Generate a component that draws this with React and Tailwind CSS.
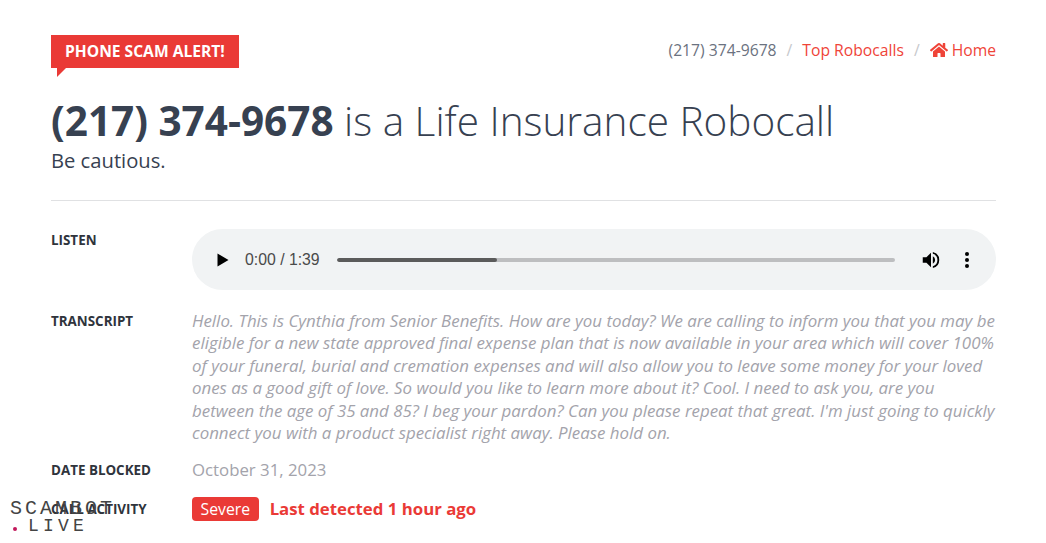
import { FaHome } from 'react-icons/fa'

const Row = ({ label, className = '', children }) => (
  <div className={`flex ${className}`}>
    <div className="w-[141px] shrink-0 text-[13.4px] font-bold text-[#2f343c] uppercase">{label}</div>
    <div className="min-w-0 flex-1">{children}</div>
  </div>
)

const AudioPlayer = () => (
  <div className="flex h-[61px] items-center rounded-[31px] bg-[#f1f3f4] pr-[26px] pl-[25px]">
    <svg width="12" height="14" viewBox="0 0 12 14" className="shrink-0">
      <path d="M0.5 0.5 L11.5 7 L0.5 13.5 Z" fill="#000" />
    </svg>
    <span className="ml-[16px] font-['Liberation_Sans',sans-serif] text-[15.8px] text-[#4a4a4a]">0:00 / 1:39</span>
    <div className="ml-[17px] flex h-1 w-[558px] overflow-hidden rounded-full bg-[#bdbec0]">
      <div className="h-full w-[160px] rounded-full bg-[#5b5b5b]" />
    </div>
    <svg width="22" height="22" viewBox="0 0 24 24" className="ml-[25px] shrink-0">
      <path d="M3 9v6h4l5 5V4L7 9H3zm13.5 3A4.5 4.5 0 0 0 14 7.97v8.05A4.5 4.5 0 0 0 16.5 12zM14 3.23v2.06a7 7 0 0 1 0 13.42v2.06a9 9 0 0 0 0-17.54z" fill="#000" />
    </svg>
    <svg width="4" height="16" viewBox="0 0 4 16" className="ml-[23px] shrink-0">
      <circle cx="2" cy="2" r="2" fill="#000" />
      <circle cx="2" cy="8" r="2" fill="#000" />
      <circle cx="2" cy="14" r="2" fill="#000" />
    </svg>
  </div>
)

export default function App() {
  return (
    <div className="relative h-[543px] overflow-hidden bg-white pt-[35px] pr-[50px] pl-[51px] font-['Open_Sans',sans-serif] text-[#374151]">
      {/* top bar */}
      <div className="flex items-start justify-between">
        <div className="relative bg-[#ea3a36] px-[14px] py-[5px] text-[15.6px] leading-[23px] font-bold text-white">
          PHONE SCAM ALERT!
          <div className="absolute top-full left-[6px] h-0 w-0 border-t-[9px] border-r-[9px] border-t-[#ea3a36] border-r-transparent" />
        </div>
        <div className="flex items-center pt-[3px] text-[15.7px] leading-[24px]">
          <span className="text-[#6b7280]">(217) 374-9678</span>
          <span className="mx-[10px] text-[#c6c8cc]">/</span>
          <span className="text-[#ef4438]">Top Robocalls</span>
          <span className="mx-[10px] text-[#c6c8cc]">/</span>
          <span className="flex items-center gap-[4px] text-[#ef4438]">
            <FaHome size={18} />
            Home
          </span>
        </div>
      </div>

      <h1 className="mt-[26px] text-[40.5px] leading-[54px] font-light">
        <span className="font-bold">(217) 374-9678</span> is a Life Insurance Robocall
      </h1>
      <p className="-mt-px text-[20.2px] leading-[26px]">Be cautious.</p>

      <div className="mt-[27px] border-t border-[#e0e1e3]" />

      <Row label="Listen" className="mt-[28px] leading-[22px]">
        <AudioPlayer />
      </Row>

      <Row label="Transcript" className="mt-[20px] leading-[22px]">
        <p className="text-[16.88px] leading-[22.4px] text-[#a3a3ab] italic">
          Hello. This is Cynthia from Senior Benefits. How are you today? We are calling to inform you that you may be eligible for a new state approved final expense plan that is now available in your area which will cover 100% of your funeral, burial and cremation expenses and will also allow you to leave some money for your loved ones as a good gift of love. So would you like to learn more about it? Cool. I need to ask you, are you between the age of 35 and 85? I beg your pardon? Can you please repeat that great. I'm just going to quickly connect you with a product specialist right away. Please hold on.
        </p>
      </Row>

      <Row label="Date Blocked" className="mt-[15px] items-center leading-[22px]">
        <span className="text-[16.8px] text-[#a3a3ab]">October 31, 2023</span>
      </Row>

      <Row label="Call Activity" className="mt-[16px] items-center leading-[22px]">
        <div className="flex items-center gap-[11px]">
          <span className="rounded bg-[#ea3a36] px-[8.5px] text-[15.8px] leading-[24px] text-white">Severe</span>
          <span className="text-[16.8px] font-bold text-[#ea3a36]">Last detected 1 hour ago</span>
        </div>
      </Row>

      {/* watermark */}
      <div className="absolute top-[499px] left-[10px] font-['Liberation_Mono',monospace] text-[#444]">
        <div className="text-[20px] leading-[20px] tracking-[3px]">SCAMBOT</div>
        <div className="flex items-center text-[18px] leading-[14px] tracking-[4.2px]">
          <span className="ml-[3px] h-1 w-1 translate-y-[3px] rounded-full bg-[#c2185b]" />
          <span className="ml-[11px]">LIVE</span>
        </div>
      </div>
    </div>
  )
}
